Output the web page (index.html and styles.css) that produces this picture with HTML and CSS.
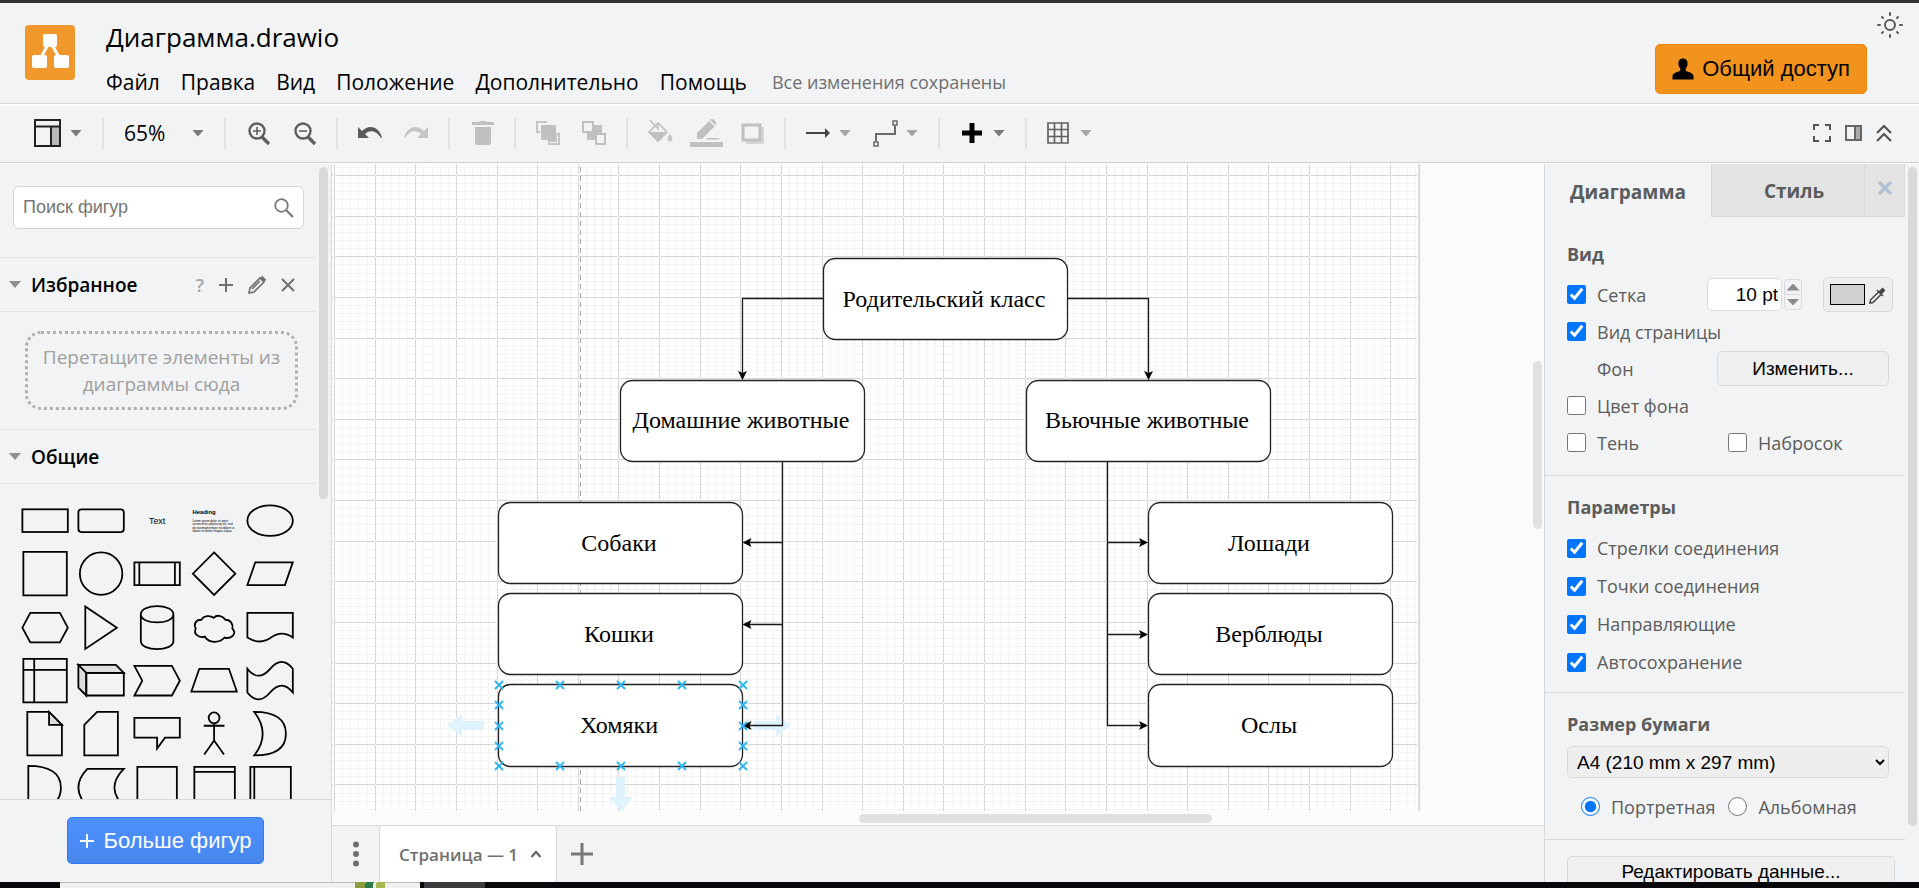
FILE: index.html
```html
<!DOCTYPE html>
<html lang="ru">
<head>
<meta charset="utf-8">
<title>Диаграмма.drawio</title>
<link rel="stylesheet" href="styles.css">
</head>
<body>
<header class="header">
  <svg class="logo" viewBox="0 0 50 55" aria-hidden="true"><rect width="50" height="55" rx="4" fill="#f0982c"/><path d="M25 16 14 36M25 16l11 20" stroke="#fff" stroke-width="3"/><g fill="#fff"><rect x="18" y="9" width="14" height="13" rx="2"/><rect x="7" y="30" width="15" height="13" rx="2"/><rect x="29" y="30" width="15" height="13" rx="2"/></g></svg>
  <div class="heading">
    <h1 class="title">Диаграмма.drawio</h1>
    <nav class="menu">
      <a href="#">Файл</a><a href="#">Правка</a><a href="#">Вид</a><a href="#">Положение</a><a href="#">Дополнительно</a><a href="#">Помощь</a>
      <span class="status">Все изменения сохранены</span>
    </nav>
  </div>
  <button class="share" type="button"><svg width="22" height="23" viewBox="0 0 24 24" aria-hidden="true"><path d="M12 0c3.500 0 5 2.500 5 5.500 0 2.500-1 4-2 5.500v2.500c3 1 8.500 2 8.500 6V23H.5v-3.500c0-4 5.500-5 8.500-6V11C8 9.500 7 8 7 5.500 7 2.500 8.500 0 12 0z"/></svg>Общий доступ</button>
  <button class="theme" type="button" aria-label="Тема"><svg width="26" height="26" viewBox="-13 -13 26 26" fill="none" stroke="#5a5a5a" stroke-width="2" stroke-linecap="round"><circle r="5"/><path d="M0-12v2M0 10v2M-12 0h2M10 0h2M-8-8l1 1M7 7l1 1M-8 8l1-1M7-7l1-1"/></svg></button>
</header>

<div class="toolbar">
  <div class="group"><button class="tool" type="button" aria-label="Вид"><svg width="27" height="28" viewBox="0 0 27 28"><path d="M17 8h9v19h-9z" fill="#b8b8b8"/><path d="M1 1h25v26H1zM1 7.500h25M17 7.500V27" fill="none" stroke="#222" stroke-width="2"/></svg><i class="caret"></i></button></div>
  <i class="sep"></i>
  <div class="group"><button class="tool zoom" type="button">65%<i class="caret"></i></button></div>
  <i class="sep"></i>
  <div class="group">
    <button class="tool" type="button" aria-label="Увеличить"><svg class="ico" viewBox="0 0 24 24" fill="none" stroke="#5f5f5f"><circle cx="11" cy="10" r="7.500" stroke-width="2.400"/><path d="m16 16 7 7" stroke-width="3.400"/><path d="M7 10h8M11 6v8" stroke-width="1.600"/></svg></button>
    <button class="tool" type="button" aria-label="Уменьшить"><svg class="ico" viewBox="0 0 24 24" fill="none" stroke="#5f5f5f"><circle cx="11" cy="10" r="7.500" stroke-width="2.400"/><path d="m16 16 7 7" stroke-width="3.400"/><path d="M7 10h8" stroke-width="1.600"/></svg></button>
  </div>
  <i class="sep"></i>
  <div class="group">
    <button class="tool" type="button" aria-label="Отменить"><svg class="ico" viewBox="0 0 24 24"><path d="M0 6v11h11L7 13c5-5 12-3 16 4h1C22 7 12 2 4 10z" fill="#5a5a5a"/></svg></button>
    <button class="tool" type="button" aria-label="Повторить"><svg class="ico" viewBox="0 0 24 24"><path d="M24 6v11H13l4-4C12 8 5 10 1 17H0C2 7 12 2 20 10z" fill="#c4c5c6"/></svg></button>
  </div>
  <i class="sep"></i>
  <div class="group"><button class="tool" type="button" aria-label="Удалить"><svg class="ico" viewBox="0 0 24 24"><path d="M2 1h7l1-1h6l1 1h7v3H2zM5 6h16v16q0 2-2 2H7q-2 0-2-2z" fill="#bfc0c1"/></svg></button></div>
  <i class="sep"></i>
  <div class="group">
    <button class="tool" type="button" aria-label="На передний план"><svg class="ico" viewBox="0 0 24 24"><path d="M5 4h15v15H5z" fill="#bfc0c1"/><path d="M11 1H1v10h3M23 13v10H13v-3h7v-7z" fill="none" stroke="#c4c5c6" stroke-width="2"/></svg></button>
    <button class="tool" type="button" aria-label="На задний план"><svg class="ico" viewBox="0 0 24 24"><path d="M5 4h15v15H5z" fill="#bfc0c1"/><path d="M1 1h10v10H1zM14 13h9v10h-9z" fill="#f1f3f4" stroke="#bfc0c1" stroke-width="2"/></svg></button>
  </div>
  <i class="sep"></i>
  <div class="group">
    <button class="tool" type="button" aria-label="Заливка"><svg class="ico" viewBox="0 0 24 24"><path d="M1 11h17.500L10 21z" fill="#bfc0c1"/><path d="m2-1 7 8M10 2 1 11l9 9 9-9zM10 2v7" fill="none" stroke="#bfc0c1" stroke-width="1.600"/><path d="M22 13c4 5 2 7.500 0 7.500s-4-2.500 0-7.500z" fill="#c4c5c6"/></svg></button>
    <button class="tool" type="button" aria-label="Цвет линии"><svg class="ico" viewBox="0 0 24 24" fill="#bfc0c1"><path d="M-4 21h33v5H-4zM14 17h11v1.500H11zM3 18v-6L15 0l5.500 5.500L8 18zM16-1c2-3 8 2 5.500 5.500z"/></svg></button>
    <button class="tool" type="button" aria-label="Тень"><svg class="ico" viewBox="0 0 24 24"><path d="M6 6h18v17H6z" fill="#d4d5d6"/><path d="M3 4h17v15H3z" fill="#f1f3f4" stroke="#bfc0c1" stroke-width="3"/></svg></button>
  </div>
  <i class="sep"></i>
  <div class="group">
    <button class="tool" type="button" aria-label="Соединение"><svg class="ico" viewBox="0 0 24 24"><path d="M0 12h20" stroke="#444" stroke-width="2"/><path d="m19 7 5 5-5 5z" fill="#444"/></svg><i class="caret soft"></i></button>
    <button class="tool" type="button" aria-label="Точки"><svg class="ico" viewBox="0 0 24 24" fill="none" stroke="#6a6a6a"><path d="M3 20v-7h19V5" stroke-width="2"/><path d="M1 21h4v4H1zM20 0h4v4h-4z" stroke-width="1.500"/></svg><i class="caret soft"></i></button>
  </div>
  <i class="sep"></i>
  <div class="group"><button class="tool" type="button" aria-label="Вставить"><svg class="ico" viewBox="0 0 24 24"><path d="M12 2v20M2 12h20" stroke="#000" stroke-width="5"/></svg><i class="caret"></i></button></div>
  <i class="sep"></i>
  <div class="group"><button class="tool" type="button" aria-label="Таблица"><svg class="ico" viewBox="0 0 24 24"><path d="M1 2h20v20H1zM7.500 2v20M14.500 2v20M1 8.500h20M1 15.500h20" fill="none" stroke="#626262" stroke-width="1.700"/></svg><i class="caret soft"></i></button></div>
  <div class="group right">
    <button class="tool" type="button" aria-label="Во весь экран"><svg width="20" height="20" viewBox="0 0 20 20"><path d="M2 7V2h5M13 2h5v5M18 13v5h-5M7 18H2v-5" fill="none" stroke="#555" stroke-width="2"/></svg></button>
    <button class="tool" type="button" aria-label="Панель"><svg width="20" height="20" viewBox="0 0 20 20"><path d="M12 3h5v14h-5z" fill="#aaa"/><path d="M3 3h15v14H3zM12 3v14" fill="none" stroke="#666" stroke-width="2"/></svg></button>
    <button class="tool" type="button" aria-label="Свернуть"><svg width="20" height="20" viewBox="0 0 20 20"><path d="m3 10 7-7 7 7M3 18l7-7 7 7" fill="none" stroke="#555" stroke-width="2.200"/></svg></button>
  </div>
</div>

<main class="main">
  <aside class="sidebar">
    <div class="side-scroll">
      <div class="side-content">
        <div class="search"><input type="text" placeholder="Поиск фигур" aria-label="Поиск фигур"><svg width="20" height="20" viewBox="0 0 20 20" fill="none" stroke="#7a7a7a"><circle cx="7.500" cy="7.500" r="6.300" stroke-width="1.800"/><path d="m12 12 7 7" stroke-width="2.200"/></svg></div>
        <div class="section-head"><i class="caret"></i><h2>Избранное</h2>
          <div class="head-tools"><button type="button" class="help">?</button>
          <button type="button" aria-label="Добавить"><svg width="14" height="14" viewBox="0 0 14 14"><path d="M7 0v14M0 7h14" stroke="#707070" stroke-width="2"/></svg></button>
          <button type="button" aria-label="Изменить"><svg width="18" height="18" viewBox="0 0 18 18" fill="none" stroke="#707070" stroke-width="1.600"><path d="m1 17 1-5L12 2l4 4L6 16zM4 13l8-8"/><path d="m13 1 4 4" stroke-width="3.500"/></svg></button>
          <button type="button" aria-label="Закрыть"><svg width="14" height="14" viewBox="0 0 14 14"><path d="m1 1 12 12M13 1 1 13" stroke="#707070" stroke-width="2"/></svg></button></div>
        </div>
        <div class="drop">Перетащите элементы из диаграммы сюда</div>
        <div class="section-head"><i class="caret"></i><h2>Общие</h2></div>
        <div class="shapes">
          <svg viewBox="-28 -27 56 54"><rect x="-23" y="-11.500" width="46" height="23"/></svg>
          <svg viewBox="-28 -27 56 54"><rect x="-23" y="-11.500" width="46" height="23" rx="3"/></svg>
          <svg viewBox="-28 -27 56 54"><text x="0" y="3" class="t-text">Text</text></svg>
          <svg viewBox="-28 -27 56 54"><text x="-22" y="-7" class="t-head">Heading</text><g class="t-lorem"><text x="-22" y="1">Lorem ipsum dolor sit amet</text><text x="-22" y="4">consectetur adipiscing elit, sed</text><text x="-22" y="8">do eiusmod tempor incididunt ut</text><text x="-22" y="11">labore et dolore magna aliqua.</text></g></svg>
          <svg viewBox="-28 -27 56 54"><ellipse rx="23" ry="15.500"/></svg>

          <svg viewBox="-28 -27 56 54"><path d="M-22-22h44v44h-44z"/></svg>
          <svg viewBox="-28 -27 56 54"><circle r="21.500"/></svg>
          <svg viewBox="-28 -27 56 54"><path d="M-23-11.500h46v23h-46zM-18-11.500v23M18-11.500v23"/></svg>
          <svg viewBox="-28 -27 56 54"><path d="M0-21.500 21.500 0 0 21.500-21.500 0z"/></svg>
          <svg viewBox="-28 -27 56 54"><path d="M-15-11.500h38l-8 23h-38z"/></svg>

          <svg viewBox="-28 -27 56 54"><path d="M-15-15h30l8 15-8 15h-30l-8-15z"/></svg>
          <svg viewBox="-28 -27 56 54"><path d="M-16-21.500 16 0l-32 21.500z"/></svg>
          <svg viewBox="-28 -27 56 54"><path d="M-16.500-13.500c0-11 33-11 33 0v27c0 11-33 11-33 0zc0 11 33 11 33 0"/></svg>
          <svg viewBox="-28 -27 56 54"><path d="M-13-8c-6 0-8 5-5.500 9-3 5 3 10 9 8 4 7 15 7 20 1 7 2 13-4 8-9 1-5-2-9-7-9-4-5-9-5-12-2-4-3-10-2-12.500 2z"/></svg>
          <svg viewBox="-28 -27 56 54"><path d="M-23-15h46v25q-11-8-22 0T-23 10z"/></svg>

          <svg viewBox="-28 -27 56 54"><path d="M-22-22h44v44h-44zM-11-22v44M-22-11h44"/></svg>
          <svg viewBox="-28 -27 56 54"><path d="M-23-16h38l8 8h-38zM-23-16l8 8v23l-8-8z" fill="#dcdddf"/><path d="M-15-8h38v23h-38z"/></svg>
          <svg viewBox="-28 -27 56 54"><path d="M-23-15h38l8 15-8 15h-38l8-15z"/></svg>
          <svg viewBox="-28 -27 56 54"><path d="M-15-12h30l8 23h-46z"/></svg>
          <svg viewBox="-28 -27 56 54"><path d="M-23-12q11 14 23 0t23 0v24q-11-14-23 0t-23 0z"/></svg>

          <svg viewBox="-28 -27 56 54"><path d="M-18-22H4L17-9v31h-35z"/><path d="M4-22V-9h13z" fill="#dcdddf"/></svg>
          <svg viewBox="-28 -27 56 54"><path d="M-17-9-4-22h21v44h-34z"/></svg>
          <svg viewBox="-28 -27 56 54"><path d="M-23-16h46V4H8L0 15V4h-23z"/></svg>
          <svg viewBox="-28 -27 56 54"><circle cy="-16" r="5.500"/><path d="M0-10.500V7m-10 14L0 7l10 14M-10.500-8h21"/></svg>
          <svg viewBox="-28 -27 56 54"><path d="M-16-22q32 0 32 22t-32 22q17-22 0-44z"/></svg>

          <svg viewBox="-28 -27 56 54"><path d="M-17-22q33 0 33 22t-33 22z"/></svg>
          <svg viewBox="-28 -27 56 54"><path d="M-14-19h37q-19 19 0 38h-37q-18-19 0-38z"/></svg>
          <svg viewBox="-28 -27 56 54"><path d="M-20-21h40v46h-40z"/></svg>
          <svg viewBox="-28 -27 56 54"><path d="M-20-21h41v46h-41zM-20-16h41"/></svg>
          <svg viewBox="-28 -27 56 54"><path d="M-20-21h41v46h-41zM-16-21v46"/></svg>
        </div>
      </div>
      <i class="thumb side-thumb"></i>
    </div>
    <div class="side-foot"><button type="button" class="more"><svg width="14" height="14" viewBox="0 0 14 14" aria-hidden="true"><path d="M7 0v14M0 7h14" stroke="#fff" stroke-width="2"/></svg>Больше фигур</button></div>
  </aside>

  <section class="work">
    <div class="canvas">
      <svg class="diagram" width="1212" height="647" viewBox="332 164 1212 647">
        <defs>
          <pattern id="minor" x="334" y="175" width="65" height="65" patternUnits="userSpaceOnUse"><path d="M0 0h1v65H0zM8 0h1v65H8zM16 0h1v65h-1zM24 0h1v65h-1zM33 0h1v65h-1zM41 0h1v65h-1zM49 0h1v65h-1zM57 0h1v65h-1zM0 0v1h65V0zM0 8v1h65V8zM0 16v1h65v-1zM0 24v1h65v-1zM0 33v1h65v-1zM0 41v1h65v-1zM0 49v1h65v-1zM0 57v1h65v-1z" fill="#f3f3f3"/></pattern>
          <pattern id="major" x="334" y="175" width="325" height="325" patternUnits="userSpaceOnUse"><path d="M0 0h1v325H0zM41 0h1v325h-1zM81 0h1v325h-1zM122 0h1v325h-1zM163 0h1v325h-1zM203 0h1v325h-1zM244 0h1v325h-1zM284 0h1v325h-1zM0 0v1h325V0zM0 41v1h325v-1zM0 81v1h325v-1zM0 122v1h325v-1zM0 163v1h325v-1zM0 203v1h325v-1zM0 244v1h325v-1zM0 284v1h325v-1z" fill="#d5d5d5"/></pattern>
          <path id="x" d="m-4-4 8 8m0-8-8 8"/>
        </defs>
        <path d="M332 164h1086v647H332z" fill="#fff"/>
        <path d="M332 164h1085v647H332z" fill="url(#minor)"/>
        <path d="M332 164h1085v647H332z" fill="url(#major)"/>
        <path d="M1418 164h2v647h-2z" fill="#dedede"/><path d="M1420 164h1v647h-1z" fill="#f2f2f2"/>
        <path d="M580.500 167v644" stroke="#a8a8a8" stroke-dasharray="5 4"/>
        <g fill="#dff3fd"><path d="m447 725 15-11v7h22v9h-22v7zM791 725l-15-11v7h-22v9h22v7zM621 812l-12-15h7v-20h9v20h8z"/></g>
        <g fill="none" stroke="#1a1a1a" stroke-width="1.300">
          <path d="M823.500 298.500h-81V374M1067.500 298.500h81V374M782.500 461.500v264H748M782.500 542.500H748M782.500 624.500H748M1107.500 461.500v264h35M1107.500 542.500h35M1107.500 634.500h35"/>
        </g>
        <g fill="#000"><path d="m742.500 380-4.500-9 4.500 2 4.500-2zM1148.500 380l-4.500-9 4.500 2 4.500-2zM742.500 542.500l9-4.500-2 4.500 2 4.500zM742.500 624.500l9-4.500-2 4.500 2 4.500zM742.500 725.500l9-4.500-2 4.500 2 4.500zM1148 542.500l-9-4.500 2 4.500-2 4.500zM1148 634.500l-9-4.500 2 4.500-2 4.500zM1148 725.500l-9-4.500 2 4.500-2 4.500z"/></g>
        <g class="nodes">
          <rect x="823.500" y="258.500" width="244" height="81" rx="12"/>
          <rect x="620.500" y="380.500" width="244" height="81" rx="12"/>
          <rect x="1026.500" y="380.500" width="244" height="81" rx="12"/>
          <rect x="498.500" y="502.500" width="244" height="81" rx="12"/>
          <rect x="498.500" y="593.500" width="244" height="81" rx="12"/>
          <rect x="498.500" y="684.500" width="244" height="82" rx="12"/>
          <rect x="1148.500" y="502.500" width="244" height="81" rx="12"/>
          <rect x="1148.500" y="593.500" width="244" height="81" rx="12"/>
          <rect x="1148.500" y="684.500" width="244" height="82" rx="12"/>
        </g>
        <g class="names">
          <text x="944" y="307">Родительский класс</text>
          <text x="741" y="428">Домашние животные</text>
          <text x="1147" y="428">Вьючные животные</text>
          <text x="619" y="551">Собаки</text>
          <text x="619" y="642">Кошки</text>
          <text x="619" y="733">Хомяки</text>
          <text x="1269" y="551">Лошади</text>
          <text x="1269" y="642">Верблюды</text>
          <text x="1269" y="733">Ослы</text>
        </g>
        <g stroke="#29b6f2" stroke-width="1.800">
          <use href="#x" x="499" y="685"/><use href="#x" x="560" y="685"/><use href="#x" x="621" y="685"/><use href="#x" x="682" y="685"/><use href="#x" x="743" y="685"/>
          <use href="#x" x="499" y="705"/><use href="#x" x="499" y="726"/><use href="#x" x="499" y="746"/>
          <use href="#x" x="743" y="705"/><use href="#x" x="743" y="726"/><use href="#x" x="743" y="746"/>
          <use href="#x" x="499" y="766"/><use href="#x" x="560" y="766"/><use href="#x" x="621" y="766"/><use href="#x" x="682" y="766"/><use href="#x" x="743" y="766"/>
        </g>
      </svg>
      <i class="thumb v-thumb"></i>
      <i class="thumb h-thumb"></i>
    </div>
    <div class="pages">
      <button type="button" class="dots" aria-label="Страницы"><svg width="6" height="26" viewBox="0 0 6 26" fill="#707070"><circle cx="3" cy="3.500" r="3"/><circle cx="3" cy="13" r="3"/><circle cx="3" cy="22.500" r="3"/></svg></button>
      <button type="button" class="page">Страница — 1<svg width="12" height="8" viewBox="0 0 12 8"><path d="m1.500 7 4.500-5 4.500 5" fill="none" stroke="#666" stroke-width="2.200"/></svg></button>
      <button type="button" class="add" aria-label="Добавить страницу"><svg width="22" height="22" viewBox="0 0 22 22"><path d="M11 0v22M0 11h22" stroke="#777" stroke-width="3"/></svg></button>
    </div>
  </section>

  <aside class="format">
    <div class="format-body">
      <div class="tabs"><button type="button" class="tab active">Диаграмма</button><button type="button" class="tab style">Стиль</button><button type="button" class="tab close" aria-label="Закрыть"><svg width="14" height="14" viewBox="0 0 14 14"><path d="m1 1 12 12M13 1 1 13" stroke="#b3c2d2" stroke-width="3.500"/></svg></button></div>
      <section class="block first">
        <h3>Вид</h3>
        <div class="row"><label><input type="checkbox" checked>Сетка</label>
          <div class="grid-size"><input type="text" class="num" value="10 pt" aria-label="Шаг сетки"><div class="spin"><button type="button" aria-label="Больше"><i class="up"></i></button><button type="button" aria-label="Меньше"><i class="down"></i></button></div></div>
          <button type="button" class="color" aria-label="Цвет сетки"><i class="swatch"></i><svg width="18" height="18" viewBox="0 0 18 18" fill="none" stroke="#444" stroke-width="1.500"><path d="m9.500 6-8 8-.5 3 3-.5 8-8M8 4l6 6"/><path d="m11 7 4-4" stroke-width="4"/></svg></button></div>
        <div class="row"><label><input type="checkbox" checked>Вид страницы</label></div>
        <div class="row"><span class="indent">Фон</span><button type="button" class="btn change">Изменить...</button></div>
        <div class="row"><label><input type="checkbox">Цвет фона</label></div>
        <div class="row pair"><label><input type="checkbox">Тень</label><label><input type="checkbox">Набросок</label></div>
      </section>
      <section class="block options">
        <h3>Параметры</h3>
        <div class="row"><label><input type="checkbox" checked>Стрелки соединения</label></div>
        <div class="row"><label><input type="checkbox" checked>Точки соединения</label></div>
        <div class="row"><label><input type="checkbox" checked>Направляющие</label></div>
        <div class="row"><label><input type="checkbox" checked>Автосохранение</label></div>
      </section>
      <section class="block">
        <h3><label for="paper">Размер бумаги</label></h3>
        <select id="paper" class="paper"><option>A4 (210 mm x 297 mm)</option></select>
        <div class="row orient"><label><input type="radio" name="orient" checked>Портретная</label><label><input type="radio" name="orient">Альбомная</label></div>
      </section>
      <section class="block last"><button type="button" class="btn edit">Редактировать данные...</button></section>
    </div>
    <i class="thumb format-thumb"></i>
  </aside>
</main>
<footer class="desk"><i class="d-black"></i><i class="d-light"></i><i class="d-green"></i><i class="d-light2"></i><i class="d-gap"></i><i class="d-gray"></i></footer>
</body>
</html>
```
FILE: styles.css
```css
:root {
  --ui: "Open Sans", "Noto Sans", sans-serif;
  --arial: "Liberation Sans", Arial, sans-serif;
  --bg: #f1f3f4;
  --line: #d8dadd;
}
* { box-sizing: border-box; }
body { margin: 0; height: 100vh; display: flex; flex-direction: column; overflow: hidden; background: var(--bg); border-top: 3px solid #333; font: 17px var(--ui); color: #000; }
button { font: inherit; color: inherit; background: none; border: 0; padding: 0; margin: 0; display: flex; align-items: center; }
h1, h2, h3 { margin: 0; font-weight: 400; }
svg { display: block; overflow: visible; flex: none; }
i { display: block; flex: none; }

.header { display: flex; flex: none; height: 101px; padding-left: 25px; padding-right: 16px; border-bottom: 1px solid var(--line); }
.logo { width: 50px; height: 55px; margin-top: 22px; }
.heading { flex: 1; padding: 14px 0 0 31px; }
.title { font-size: 26px; line-height: 40px; }
.menu { display: flex; align-items: center; gap: 21px; height: 50px; font-size: 21px; white-space: nowrap; }
.menu a { color: #000; text-decoration: none; }
.status { padding-left: 4px; font-size: 18px; color: #707070; }
.share { height: 50px; margin-top: 41px; padding: 0 16px; gap: 8px; border: 1px solid #f08705; border-radius: 5px; background: #f2931e; font: 22px var(--arial); }
.theme { height: 26px; margin: 9px 0 0 10px; }

.toolbar { display: flex; flex: none; align-items: center; gap: 20px; height: 59px; padding: 0 25px 2px 34px; border-top: 2px solid #fff; border-bottom: 1px solid #cfd1d3; }
.group { display: flex; gap: 22px; }
.group.right { margin-left: auto; gap: 11px; }
.tool { gap: 9px; }
.ico { width: 24px; height: 24px; }
.zoom { width: 80px; justify-content: space-between; font-size: 21px; }
.caret { width: 12px; height: 7px; background: #7a7a7a; clip-path: polygon(0 0, 100% 0, 50% 100%); }
.soft { background: #a5a5a5; }
.sep { width: 2px; height: 31px; background: #e2e3e4; }

.main { display: flex; flex: 1; min-height: 0; border-top: 1px solid #fff; }
.sidebar { display: flex; flex-direction: column; flex: none; width: 332px; border-right: 1px solid var(--line); }
.side-scroll { position: relative; flex: 1; min-height: 0; overflow: hidden; }
.side-content { width: 316px; }
.thumb { position: absolute; width: 9px; border-radius: 5px; background: #d8d9db; }
.side-thumb { right: 3px; top: 3px; height: 332px; }
.search { display: flex; align-items: center; height: 43px; margin: 22px 12px 28px 13px; padding: 0 9px; background: #fff; border: 1px solid #d5d5d5; border-radius: 6px; }
.search input { flex: 1; min-width: 0; border: 0; padding: 0; background: none; outline: 0; font: 18px var(--arial); }
.search input::placeholder { color: #757575; }
.section-head { display: flex; align-items: center; gap: 10px; height: 55px; padding: 0 21px 0 9px; border-top: 1px solid #e2e3e5; border-bottom: 1px solid #e2e3e5; }
.section-head .caret { background: #8f8f8f; }
.section-head h2 { flex: 1; font-size: 19px; font-weight: 600; }
.head-tools { display: flex; align-items: center; gap: 15px; }
.help { font-size: 18px; font-weight: 600; color: #a5a5a5; }
.drop { display: flex; align-items: center; justify-content: center; height: 79px; margin: 19px 18px 19px 25px; border: 3px dotted #b0b0b0; border-radius: 16px; font-size: 19px; line-height: 27px; text-align: center; color: #a0a0a0; }
.shapes { display: grid; grid-template-columns: repeat(5, 1fr); grid-template-rows: repeat(6, minmax(0, 1fr)); height: 320px; margin: 10px 18px 0 17px; fill: none; stroke: #000; stroke-width: 1.8; font-family: var(--arial); }
.shapes svg { width: 100%; height: 100%; }
.shapes text { fill: #000; stroke: none; }
.t-text { font-size: 9px; text-anchor: middle; }
.t-head { font-size: 6px; font-weight: 700; }
.t-lorem { font-size: 3px; }
.side-foot { display: flex; justify-content: center; flex: none; height: 83px; padding-top: 17px; border-top: 1px solid var(--line); }
.more { height: 47px; gap: 10px; padding: 0 12px; border: 1px solid #3079ed; border-radius: 5px; background: linear-gradient(#4d90fe, #4787ed); color: #fff; font: 22px var(--arial); }

.work { display: flex; flex-direction: column; flex: 1; min-width: 0; }
.canvas { position: relative; flex: 1; min-height: 0; overflow: hidden; background: #fbfbfb; }
.nodes { fill: #fff; stroke: #222; stroke-width: 1.3; }
.names { font: 24px "Liberation Serif", "Times New Roman", serif; text-anchor: middle; }
.v-thumb { right: 2px; top: 197px; height: 168px; background: #e1e1e1; }
.h-thumb { left: 527px; bottom: 2px; width: 353px; height: 9px; background: #e1e1e1; }
.pages { display: flex; flex: none; height: 57px; border-top: 1px solid var(--line); }
.dots { width: 47px; justify-content: center; }
.page { gap: 12px; padding: 0 14px 0 19px; background: #fff; border: solid var(--line); border-width: 0 1px; font-size: 17px; font-weight: 600; color: #707070; }
.add { padding-left: 14px; }

.format { position: relative; flex: none; width: 375px; overflow: hidden; border-left: 1px solid var(--line); color: #5c5c5c; font-size: 18px; }
.format-body { margin-right: 14px; }
.tabs { display: grid; grid-template-columns: 166px 1fr 41px; height: 53px; }
.tab { justify-content: center; background: #e4e4e4; border: solid var(--line); border-width: 0 0 1px 1px; font-size: 19px; font-weight: 700; }
.tab.active { padding-top: 2px; background: none; border: 0; }
.tab.style { padding: 2px 0 0 12px; }
.tab.close { border-right-width: 1px; padding-bottom: 4px; }
.block { padding: 10px 16px 14px 22px; border-bottom: 1px solid var(--line); }
.block.first { padding-top: 16px; padding-bottom: 14px; }
.block.options { padding-bottom: 11px; }
.options .row { height: 38px; }
.block h3 { font-size: 18px; line-height: 43px; font-weight: 700; }
.row { display: flex; align-items: center; height: 37px; }
.row label { display: flex; align-items: center; gap: 11px; }
.row input[type="checkbox"], .row input[type="radio"] { width: 19px; height: 19px; margin: 0; accent-color: #0075ff; }
.indent { padding-left: 30px; }
.grid-size { display: flex; align-items: center; gap: 2px; margin-left: auto; }
.num { width: 75px; height: 33px; padding: 0 3px; border: 1px solid var(--line); border-radius: 5px; text-align: right; font: 19px var(--arial); }
.spin { width: 18px; height: 31px; border: 1px solid var(--line); border-radius: 4px; }
.spin button { width: 100%; height: 14px; justify-content: center; }
.spin button + button { height: 15px; border-top: 1px solid var(--line); }
.up, .down { width: 13px; height: 7px; background: #8a8a8a; clip-path: polygon(0 100%, 100% 100%, 50% 0); }
.down { clip-path: polygon(0 0, 100% 0, 50% 100%); }
.color { width: 70px; height: 35px; margin: 0 -4px 0 21px; justify-content: center; gap: 4px; background: #eee; border: 1px solid var(--line); border-radius: 5px; }
.swatch { width: 35px; height: 21px; background: #d0d0d0; border: 1px solid #000; }
.btn { justify-content: center; height: 35px; background: #efefef; border: 1px solid var(--line); border-radius: 5px; color: #000; font: 19px var(--arial); }
.change { width: 172px; margin-left: auto; }
.pair label { width: 163px; }
.paper { display: block; width: 100%; height: 32px; padding: 0 5px; background: #eee; border: 1px solid var(--line); border-radius: 5px; color: #000; font: 19px var(--arial); }
.orient { margin-top: 10px; padding-left: 14px; gap: 13px; }
.last { padding-top: 16px; padding-right: 10px; }
.edit { width: 100%; height: 32px; }
.format-thumb { right: 2px; top: 3px; height: 659px; }

.desk { display: flex; flex: none; height: 6px; background: #08080c; }
.d-black { width: 60px; }
.d-light { width: 295px; background: #f0f0f0; border-top: 1px solid #bbb; }
.d-green { width: 30px; background: linear-gradient(100deg, #8a9c3c 0 35%, #2f7a4c 35% 60%, #e8efe0 60% 70%, #a5b850 70%); }
.d-light2 { width: 35px; background: #f0f0f0; border-top: 1px solid #bbb; }
.d-gap { width: 4px; }
.d-gray { width: 61px; background: #3b3b40; }
```
